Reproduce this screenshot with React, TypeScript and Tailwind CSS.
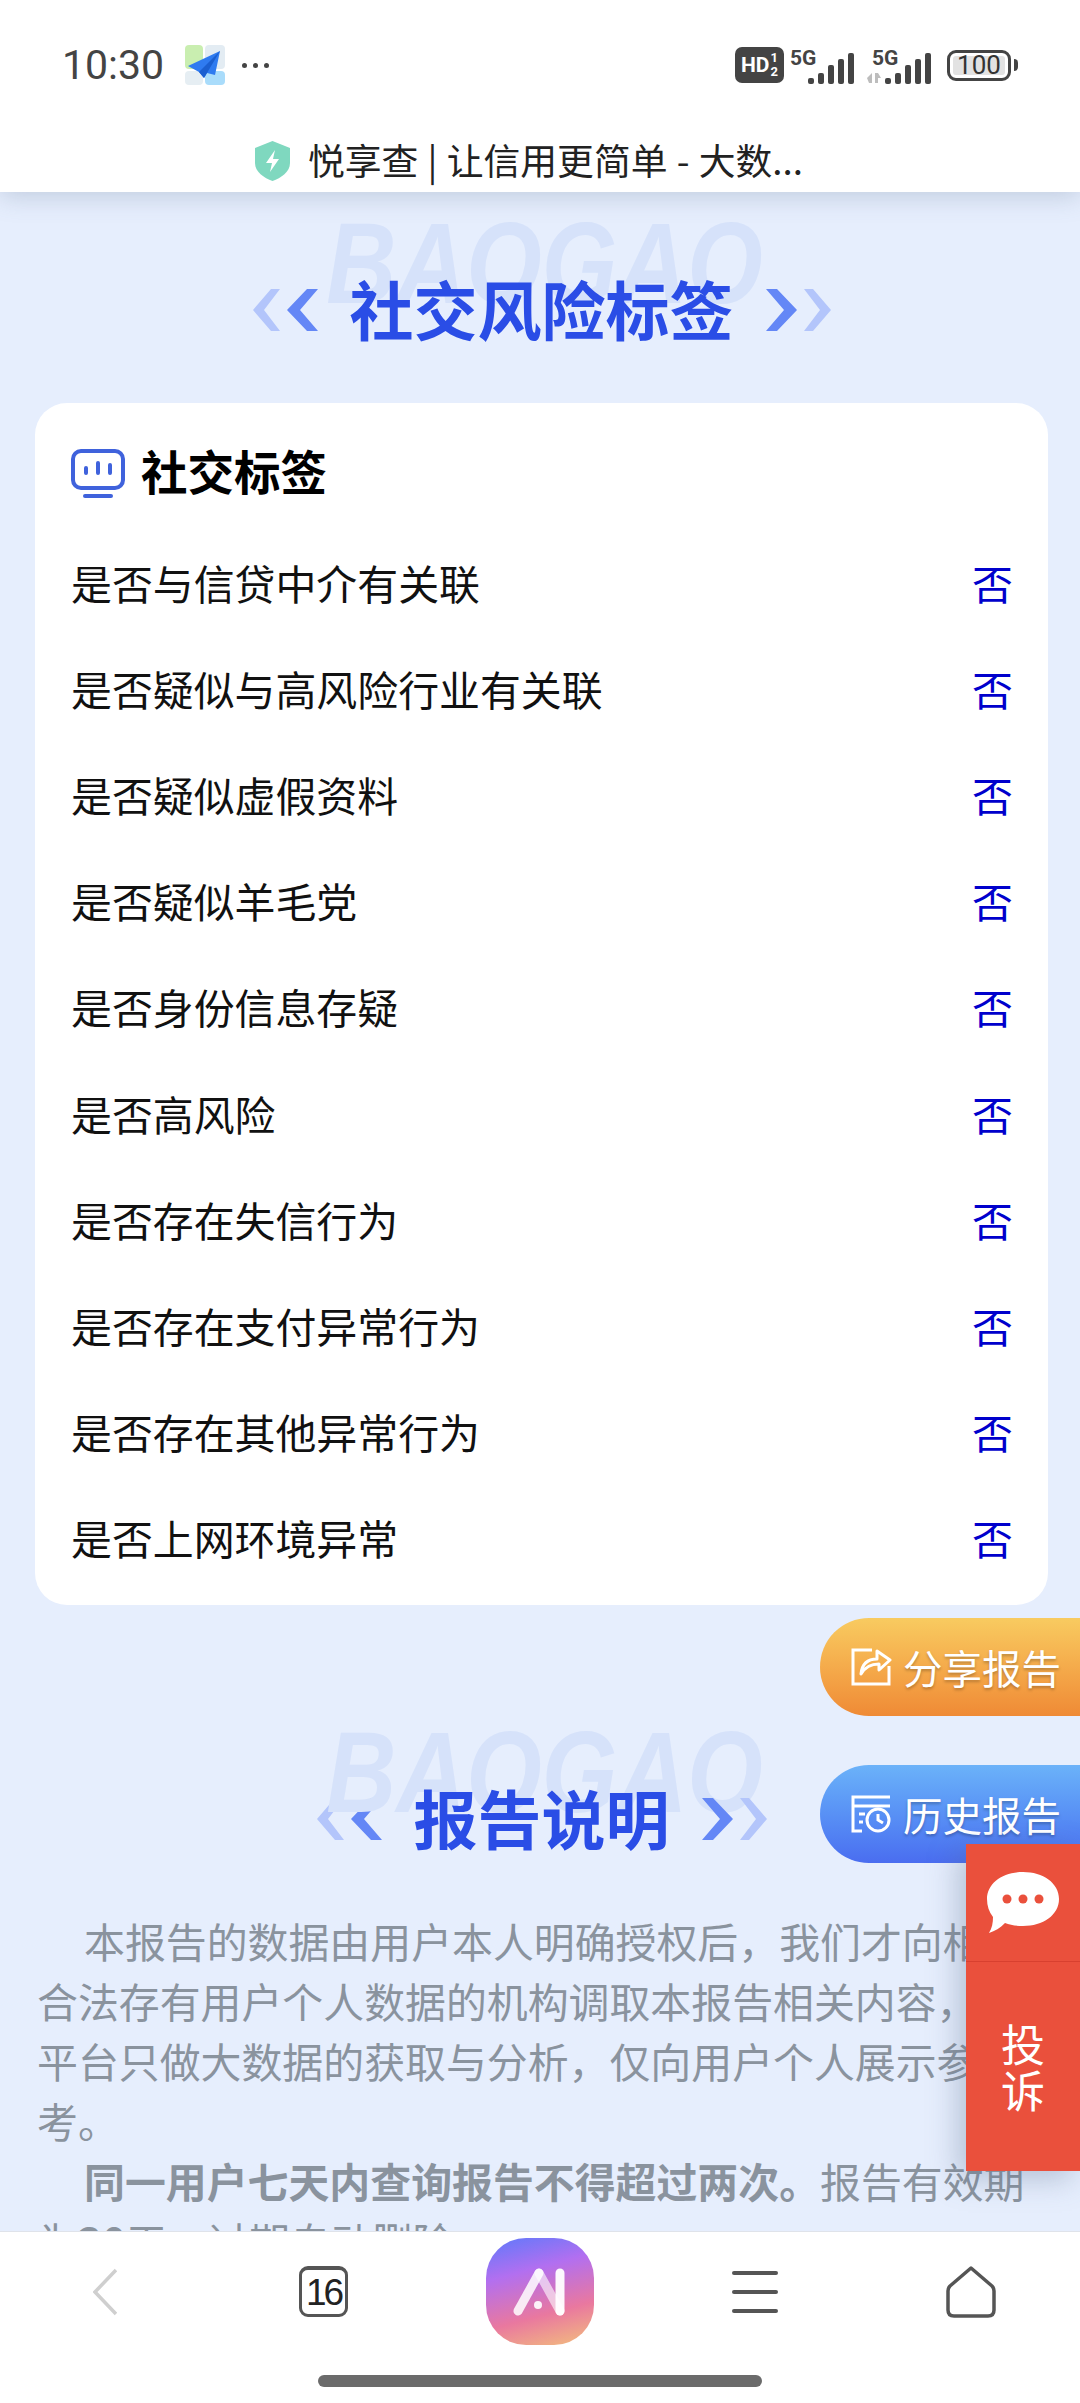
const rows = [
  "是否与信贷中介有关联",
  "是否疑似与高风险行业有关联",
  "是否疑似虚假资料",
  "是否疑似羊毛党",
  "是否身份信息存疑",
  "是否高风险",
  "是否存在失信行为",
  "是否存在支付异常行为",
  "是否存在其他异常行为",
  "是否上网环境异常",
];

// full-width comma
const C = "\uFF0C";

function Chevrons({ flip }: { flip?: boolean }) {
  return (
    <svg width="65" height="42" viewBox="0 0 65 42" className={flip ? "shrink-0 -scale-x-100" : "shrink-0"}>
      <polygon points="27,0 18,0 0,21 18,42 27,42 11,21" fill="#b3c5fb" />
      <polygon points="65,0 54,0 34,21 54,42 65,42 47,21" fill="#6487f6" />
    </svg>
  );
}

function SectionTitle({ title }: { title: string }) {
  return (
    <div className="relative h-[176px] flex items-center justify-center gap-[32px]">
      {/* watermark behind the heading */}
      <div className="absolute left-[6px] right-0 top-[-16px] text-center text-[97px] leading-[115px] font-bold italic text-[#d6e2fa] scale-y-[1.18] [font-family:'Liberation_Sans',sans-serif]">
        BAOGAO
      </div>
      <Chevrons />
      <h2 className="relative mb-[6px] text-[64px] leading-[80px] font-bold text-[#2a4de6]">{title}</h2>
      <Chevrons flip />
    </div>
  );
}

function Signal({ arrows }: { arrows?: boolean }) {
  return (
    <svg width="66" height="40" viewBox="0 0 66 40">
      <text x={arrows ? 5 : 0} y="20" fontSize="21" fontWeight="700" fill="#444" fontFamily="Roboto, sans-serif">5G</text>
      {arrows && (
        <g fill="#bdbdbd">
          <polygon points="0,33 5,28 5,38 2,38" />
          <polygon points="8,28 11,28 14,33 11,33 11,38 8,38" />
        </g>
      )}
      <g fill="#444">
        <rect x="18" y="33" width="6" height="6" rx="2" />
        <rect x="28" y="28" width="6" height="11" rx="2" />
        <rect x="38" y="20" width="6" height="19" rx="2" />
        <rect x="48" y="14" width="6" height="25" rx="2" />
        <rect x="58" y="8" width="6" height="31" rx="2" />
      </g>
    </svg>
  );
}

export default function App() {
  return (
    <div className="relative w-[1080px] h-[2403px] overflow-hidden flex flex-col bg-[#e6eefd] [font-family:'Noto_Sans_CJK_SC',sans-serif]">
      {/* Status bar + page title */}
      <header className="relative z-10 shrink-0 h-[192px] bg-white shadow-[0_4px_24px_rgba(90,110,140,0.28)]">
        <div className="h-[130px] px-[62px] flex items-center justify-between">
          <div className="flex items-center">
            <span className="text-[41px] leading-none text-[#444] [font-family:Roboto,sans-serif]">10:30</span>
            <svg width="40" height="40" viewBox="0 0 40 40" className="ml-[21px]">
              <rect x="0" y="0" width="18" height="24" rx="4" fill="#c9eeb0" />
              <rect x="20" y="0" width="20" height="24" rx="4" fill="#e3ecf3" />
              <rect x="0" y="26" width="18" height="14" rx="4" fill="#e6eef3" />
              <rect x="20" y="26" width="20" height="14" rx="4" fill="#a9dcfb" />
              <polygon points="35,6 3,21 14,27 19,33 22,28 30,30" fill="#2f7bf0" />
              <polygon points="35,6 14,27 19,33" fill="#1b5fd0" />
            </svg>
            <div className="ml-[17px] flex gap-[6px]">
              <span className="w-[5px] h-[5px] rounded-full bg-[#444]" />
              <span className="w-[5px] h-[5px] rounded-full bg-[#444]" />
              <span className="w-[5px] h-[5px] rounded-full bg-[#444]" />
            </div>
          </div>
          <div className="flex items-center">
            <div className="w-[49px] h-[36px] rounded-[7px] bg-[#444] flex items-center justify-center text-white [font-family:Roboto,sans-serif] font-bold">
              <span className="text-[21px] leading-none">HD</span>
              <span className="flex flex-col text-[13px] leading-[14px] ml-[1px]">
                <span>1</span>
                <span>2</span>
              </span>
            </div>
            <div className="ml-[6px]">
              <Signal />
            </div>
            <div className="ml-[11px]">
              <Signal arrows />
            </div>
            <div className="ml-[14px] flex items-center">
              <div className="w-[64px] h-[31px] rounded-[9px] border-[3px] border-[#444] p-[3px]">
                <div className="h-full rounded-[3px] bg-[#e2e2e2] flex items-center justify-center text-[26px] leading-none text-[#333] [font-family:Roboto,sans-serif]">
                  100
                </div>
              </div>
              <span className="ml-[3px] w-[4px] h-[12px] rounded-r-sm bg-[#444]" />
            </div>
          </div>
        </div>
        <div className="h-[62px] pr-[22px] flex items-center justify-center">
          <svg width="35" height="40" viewBox="0 0 35 40" className="mr-[18px] shrink-0">
            <path d="M17.5 0 L35 7 V22 C35 31 26 37 17.5 40 C9 37 0 31 0 22 V7 Z" fill="#7fd8bf" />
            <polygon points="20,9 11,22 17,22 15,31 24,18 18,18" fill="#fff" />
          </svg>
          <span className="text-[36.8px] leading-none text-[#222] [word-spacing:1px] mb-[3px]">悦享查 | 让信用更简单 - 大数...</span>
        </div>
      </header>

      {/* Scrolled page content */}
      <main className="flex-1 overflow-hidden pl-[35px] pr-[32px] pt-[30px]">
        <SectionTitle title="社交风险标签" />
        <section className="mt-[5px] bg-white rounded-[32px] pl-[36px] pr-[35px] pt-[46px] pb-[13px]">
          <div className="h-[50px] mb-[31px] flex items-center">
            <svg width="54" height="50" viewBox="0 0 54 50" fill="none" className="mr-[16px]">
              <rect x="2" y="2" width="50" height="37" rx="8" stroke="#3f62dc" strokeWidth="4" />
              <path d="M15 19v5M27 14v10M39 16v8" stroke="#3f62dc" strokeWidth="4" strokeLinecap="round" />
              <path d="M14 47h26" stroke="#3f62dc" strokeWidth="4" strokeLinecap="round" />
            </svg>
            <h3 className="mb-[8px] text-[46.5px] leading-none font-bold text-black">社交标签</h3>
          </div>
          {rows.map((label) => (
            <div key={label} className="h-[106.2px] flex items-center justify-between text-[40.9px] leading-none">
              <span className="text-[#111]">{label}</span>
              <span className="text-[#0000cc]">否</span>
            </div>
          ))}
        </section>

        <div className="mt-[126px]">
          <SectionTitle title="报告说明" />
        </div>
        <div className="mt-[4px] pl-[2px] pr-[5px] text-[40.9px] leading-[60px] text-[#8a939e]">
          <p className="indent-[47px]">
            {`本报告的数据由用户本人明确授权后${C}我们才向相关合法存有用户个人数据的机构调取本报告相关内容${C}本平台只做大数据的获取与分析${C}仅向用户个人展示参考。`}
          </p>
          <p className="indent-[47px]">
            <b>同一用户七天内查询报告不得超过两次。</b>报告有效期为<b>30</b>天{C}过期自动删除。
          </p>
        </div>
      </main>

      {/* Bottom browser bar */}
      <nav className="relative z-10 shrink-0 h-[172px] bg-white border-t border-[#dfe3ea]">
        <div className="h-[113px] pt-[6px] pl-[93px] flex items-center">
          <svg width="24" height="48" viewBox="0 0 24 48" fill="none">
            <path d="M23 2 L2 24 L23 46" stroke="#cfcfcf" strokeWidth="3.5" />
          </svg>
          <div className="ml-[182px] w-[49px] h-[51px] rounded-[9px] border-[3px] border-t-[4px] border-[#555] flex items-center justify-center text-[37px] leading-none text-[#222] [font-family:'Liberation_Sans',sans-serif] tracking-[-3px]">
            16
          </div>
          <div className="ml-[138px] w-[108px] h-[107px] rounded-[40px] bg-[linear-gradient(165deg,#6279fa_2%,#b26ff0_32%,#e9789f_68%,#f3bf7c_100%)] flex items-center justify-center">
            <svg width="54" height="50" viewBox="0 0 54 50" fill="none">
              <path d="M5 44 L26 6" stroke="#fff" strokeOpacity="0.85" strokeWidth="9" strokeLinecap="round" />
              <path d="M26 6 L47 44" stroke="#fff" strokeOpacity="0.6" strokeWidth="9" strokeLinecap="round" />
              <path d="M47 6 V44" stroke="#fff" strokeOpacity="0.95" strokeWidth="9" strokeLinecap="round" />
              <circle cx="25" cy="38" r="4" fill="#fff" fillOpacity="0.9" />
            </svg>
          </div>
          <div className="ml-[138px] w-[46px] flex flex-col gap-[15px]">
            <span className="h-[4px] rounded-full bg-[#555]" />
            <span className="h-[4px] rounded-full bg-[#555]" />
            <span className="h-[4px] rounded-full bg-[#555]" />
          </div>
          <svg width="50" height="52" viewBox="0 0 50 52" fill="none" className="ml-[168px]">
            <path d="M25 2 L46 20 Q48 22 48 25 V44 Q48 50 42 50 H8 Q2 50 2 44 V25 Q2 22 4 20 Z" stroke="#555" strokeWidth="3.5" strokeLinejoin="round" />
          </svg>
        </div>
        <div className="mt-[30px] mx-auto w-[444px] h-[12px] rounded-full bg-[#6b6b6b]" />
      </nav>

      {/* Floating buttons */}
      <button className="absolute z-20 left-[820px] top-[1618px] w-[260px] h-[98px] rounded-l-[49px] bg-gradient-to-b from-[#f8cb60] to-[#ef8a35] flex items-center pl-[30px] text-[39.5px] leading-none text-white [text-shadow:0_2px_3px_rgba(0,0,0,0.25)]">
        <svg width="42" height="40" viewBox="0 0 42 40" fill="none" stroke="#fff" strokeWidth="3" className="mr-[11px] shrink-0">
          <path d="M22 3 H3 V37 H39 V19" />
          <path d="M11 27 C12 17 18 12 27 12 V4 L40 13 L29 23 V17 C21 17 15 20 11 27 Z" strokeLinejoin="round" />
        </svg>
        分享报告
      </button>
      <button className="absolute z-20 left-[820px] top-[1765px] w-[260px] h-[98px] rounded-l-[49px] bg-gradient-to-b from-[#6bb2f9] to-[#4a6df0] flex items-center pl-[30px] text-[39.5px] leading-none text-white [text-shadow:0_2px_3px_rgba(0,0,0,0.25)]">
        <svg width="42" height="40" viewBox="0 0 42 40" fill="none" stroke="#fff" strokeWidth="3" className="mr-[11px] shrink-0">
          <path d="M40 3 H3 V37 H12" />
          <path d="M3 12 H40" />
          <path d="M9 20 H15 M9 28 H13" />
          <circle cx="28" cy="26" r="11" />
          <path d="M28 20 V26 L33 29" />
        </svg>
        历史报告
      </button>
      <div className="absolute z-20 left-[966px] top-[1844px] w-[114px] h-[327px] bg-[#ea503c] flex flex-col items-center shadow-[-8px_8px_28px_rgba(90,110,140,0.35)]">
        <div className="w-full h-[118px] shrink-0 border-b border-[#d8402f] flex items-center justify-center">
          <svg width="72" height="62" viewBox="0 0 72 62">
            <path d="M36 0 C56 0 72 11 72 27 C72 43 56 54 36 54 C29 54 23 53 18 51 C13 56 8 59 2 61 C5 56 6 51 6 45 C2 40 0 34 0 27 C0 11 16 0 36 0 Z" fill="#fff" />
            <circle cx="20" cy="27" r="4.5" fill="#ea503c" />
            <circle cx="36" cy="27" r="4.5" fill="#ea503c" />
            <circle cx="52" cy="27" r="4.5" fill="#ea503c" />
          </svg>
        </div>
        <div className="mt-[58px] w-[46px] text-center text-[44px] leading-[46px] text-white">投诉</div>
      </div>
    </div>
  );
}
